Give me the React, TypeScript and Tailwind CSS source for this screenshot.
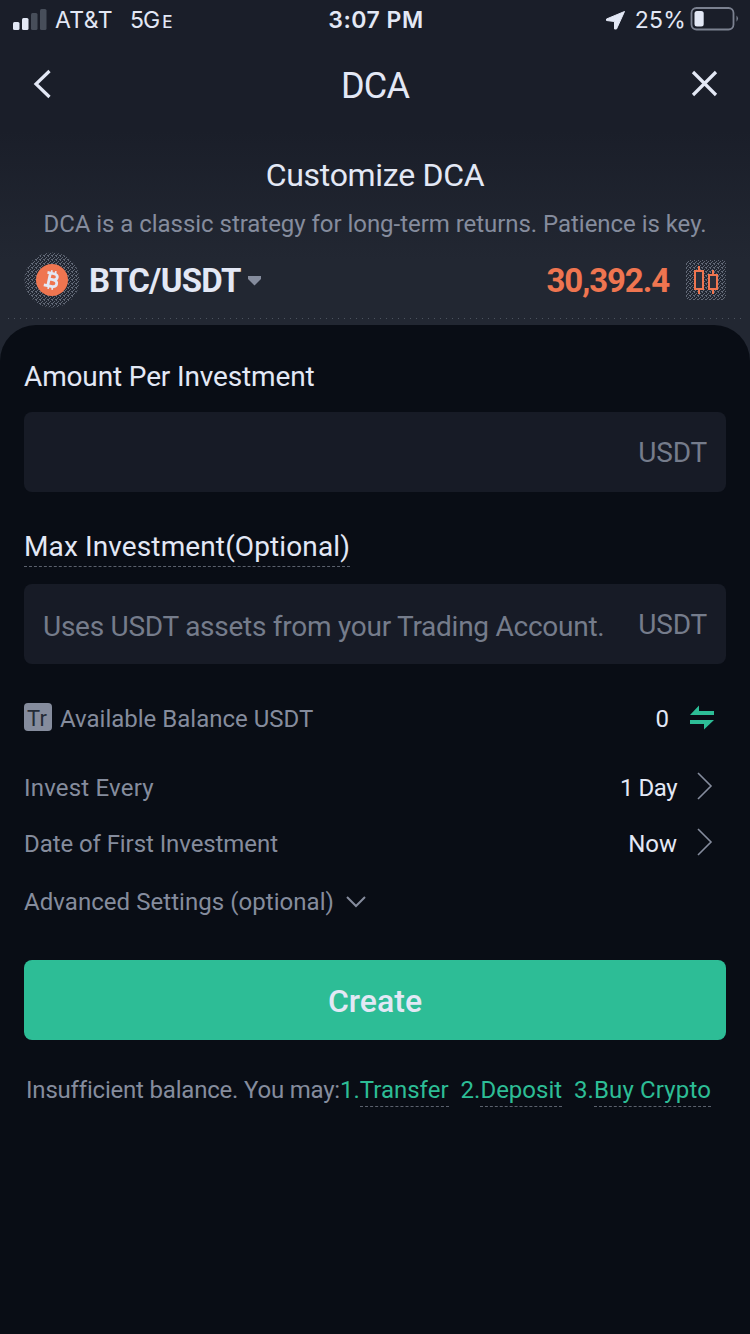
import type { ReactNode } from "react";

function Signal() {
  return (
    <svg width="34" height="22" viewBox="0 0 34 22" className="mt-[2px] shrink-0">
      <rect x="0" y="13" width="6.5" height="8" rx="1.5" fill="#e3e8f5" />
      <rect x="9" y="9" width="6.5" height="12" rx="1.5" fill="#e3e8f5" />
      <rect x="18" y="4" width="6.5" height="17" rx="1.5" fill="#474e5a" />
      <rect x="27" y="0" width="6.5" height="21" rx="1.5" fill="#474e5a" />
    </svg>
  );
}

function StatusBar() {
  return (
    <div className="grid h-10 grid-cols-3 items-center pr-[11px] pb-[2px] pl-[13px] font-['Inter',sans-serif] text-[23px] leading-8">
      <div className="flex items-center">
        <Signal />
        <span className="ml-2 pt-[2px] tracking-[0.4px]">AT&amp;T</span>
        <span className="ml-[17px] pt-[2px] tracking-[-0.9px]">5G</span>
        <span className="ml-[3px] pt-[5px] text-[17px] font-medium">E</span>
      </div>
      <div className="pt-[2px] text-center font-semibold tracking-[0.5px]">3:07 PM</div>
      <div className="flex items-center justify-end">
        <svg width="19" height="19" viewBox="0 0 19 19" className="mt-[2px] mr-[10px]">
          <path d="M18.5 0.500 L0.500 8 L0.500 9.500 L8.500 10.500 L8.500 18 L10.500 18 Z" fill="#e3e8f5" stroke="#e3e8f5" strokeWidth="1" strokeLinejoin="round" />
        </svg>
        <span className="pt-[2px] tracking-[0.2px]">25%</span>
        <svg width="49" height="24" viewBox="0 0 49 24" className="ml-1">
          <rect x="1.5" y="1" width="42" height="21.500" rx="5" fill="none" stroke="#7b8190" strokeWidth="1.8" />
          <rect x="4.500" y="4" width="9.200" height="15.500" rx="2.500" fill="#e3e8f5" />
          <path d="M46.500 8.500 Q49.500 11.500 46.500 14.800 Z" fill="#7b8190" />
        </svg>
      </div>
    </div>
  );
}

function Speckle({ id }: { id: string }) {
  return (
    <pattern id={id} width="4" height="4" patternUnits="userSpaceOnUse">
      <path d="M0 0h1v1h-1z M2 1h1v1h-1z M1 2h1v1h-1z M3 3h1v1h-1z M0 3h1v1h-1z" fill="#626977" />
    </pattern>
  );
}

function BitcoinBadge() {
  return (
    <svg width="56" height="56" viewBox="0 0 56 56" className="shrink-0">
      <defs>
        <Speckle id="coin-speckle" />
      </defs>
      <circle cx="28" cy="28" r="27.500" fill="url(#coin-speckle)" />
      <circle cx="28" cy="28" r="16" fill="#ef7550" />
      <g transform="rotate(12 28 28)" fill="none" stroke="#e3e8f5" strokeWidth="2.800">
        <path d="M22 21.500 H28.500 C34 21.500 34 27.500 28.500 27.500 H25 M28.500 27.500 C35 27.500 35 34.500 28.500 34.500 H21 M25 21.500 V34.500" />
        <path d="M26 18.500 V22 M30 18.500 V22 M26 34 V37.500 M30 34 V37.500" strokeWidth="1.700" />
      </g>
    </svg>
  );
}

function Candles() {
  return (
    <svg width="40" height="40" viewBox="0 0 40 40" className="shrink-0">
      <defs>
        <Speckle id="candle-speckle" />
      </defs>
      <rect width="40" height="40" rx="4" fill="url(#candle-speckle)" />
      <path d="M9 11 H17 V29 H9 Z M13 6 V11 M13 29 V34 M23 15 H31 V29 H23 Z M27 10 V15 M27 29 V34" fill="#292e3a" stroke="#ef7550" strokeWidth="2" />
    </svg>
  );
}

function Chevron() {
  return (
    <svg width="16" height="28" viewBox="0 0 16 28" className="mb-1 ml-5 shrink-0">
      <path d="M1 1 L14 14 L1 27" fill="none" stroke="#858c9d" strokeWidth="1.6" />
    </svg>
  );
}

function Row({ label, children }: { label: ReactNode; children: ReactNode }) {
  return (
    <div className="flex h-14 items-center text-[24px]">
      <span className="mr-auto text-[#858c9d]">{label}</span>
      {children}
      <Chevron />
    </div>
  );
}

function Link({ children }: { children: ReactNode }) {
  return <span className="inline-block h-[33px] border-b border-dashed border-[#5b616d]">{children}</span>;
}

export default function App() {
  return (
    <div className="flex h-[1334px] w-[750px] flex-col overflow-hidden bg-[linear-gradient(#1a1e29_0px,#1a1e29_130px,#222732_260px,#222732_400px)] font-['Roboto','Liberation_Sans',sans-serif] whitespace-nowrap text-[#e3e8f5]">
      <StatusBar />
      <header className="flex h-[90px] items-center justify-between pr-8 pl-[33px]">
        <svg width="26" height="30" viewBox="0 0 26 30" className="mb-[3px]">
          <path d="M16.500 2 L3 15 L16.500 28" fill="none" stroke="#e3e8f5" strokeWidth="3.200" />
        </svg>
        <h1 className="pt-[2px] text-[36px] leading-[88px] tracking-[-0.8px]">DCA</h1>
        <svg width="27" height="27" viewBox="0 0 27 27" className="mb-[3px]">
          <path d="M2 2 L25 25 M25 2 L2 25" fill="none" stroke="#e3e8f5" strokeWidth="3.200" />
        </svg>
      </header>
      <h2 className="mt-[25px] text-center text-[32px] leading-10 tracking-[-0.3px]">Customize DCA</h2>
      <p className="mt-[14px] text-center text-[24px] leading-[30px] tracking-[-0.04px] text-[#858c9d]">
        DCA is a classic strategy for long-term returns. Patience is key.
      </p>
      <div className="mt-[13px] flex h-14 items-center px-6">
        <BitcoinBadge />
        <span className="ml-[9px] pt-[2px] text-[33px] font-bold tracking-[-0.7px]">BTC/USDT</span>
        <svg width="13" height="10" viewBox="0 0 13 10" className="ml-[7px] mt-px">
          <path d="M0 0 H13 V3 L6.500 9.500 L0 3 Z" fill="#858c9d" />
        </svg>
        <span className="ml-auto pt-[2px] text-[33px] font-bold tracking-[-1.1px] text-[#ef7550]">30,392.4</span>
        <span className="ml-[17px]">
          <Candles />
        </span>
      </div>
      <div className="mx-2 mt-[10px] h-px shrink-0 bg-[repeating-linear-gradient(90deg,#4c535f_0px,#4c535f_1px,transparent_1px,transparent_6px)]" />
      <main className="mt-[6px] flex-1 rounded-t-[36px] bg-[#090d15] px-6 pt-8">
        <div className="text-[28px] leading-10 tracking-[-0.14px]">Amount Per Investment</div>
        <div className="mt-[15px] flex h-20 items-center justify-end rounded-lg bg-[#171b26] pr-[19px] text-[28px] text-[#757c8b]">
          <span className="pt-[2px] tracking-[-0.2px]">USDT</span>
        </div>
        <div className="mt-[34px] flex">
          <div className="h-[41px] border-b border-dashed border-[#5b616d] pt-px text-[28px] leading-10 tracking-[0.12px]">Max Investment(Optional)</div>
        </div>
        <div className="mt-[17px] flex h-20 items-center justify-between rounded-lg bg-[#171b26] pr-[19px] pl-[19px] text-[28px] text-[#757c8b]">
          <span className="pt-[6px] tracking-[-0.26px]">Uses USDT assets from your Trading Account.</span>
          <span className="pt-[2px] tracking-[-0.2px]">USDT</span>
        </div>
        <div className="mt-[35px] flex h-10 items-center text-[24px]">
          <span className="mb-1 flex h-7 w-7 items-center justify-center rounded bg-[#858c9d] pt-1 pr-[2px] text-[22px] leading-6 text-[#242b36]">Tr</span>
          <span className="ml-2 text-[#858c9d]">Available Balance USDT</span>
          <span className="ml-auto">0</span>
          <svg width="26" height="26" viewBox="0 0 26 26" className="mr-[11px] mb-[2px] ml-5">
            <path d="M25 6 V10 H1 L10 0.500 V6 Z M1 15 H25 L15 24.500 V19 H1 Z" fill="#2dbd96" />
          </svg>
        </div>
        <div className="mt-[21px] pr-[13px]">
          <Row label={<span className="tracking-[0.2px]">Invest Every</span>}>
            <span className="tracking-[-0.5px]">1 Day</span>
          </Row>
          <Row label={<span className="tracking-[-0.08px]">Date of First Investment</span>}>
            <span>Now</span>
          </Row>
        </div>
        <div className="flex h-[60px] items-center text-[24px] text-[#858c9d]">
          <span className="tracking-[0.05px]">Advanced Settings (optional)</span>
          <svg width="20" height="12" viewBox="0 0 20 12" className="ml-3">
            <path d="M1 1 L10 10 L19 1" fill="none" stroke="#858c9d" strokeWidth="2" />
          </svg>
        </div>
        <button className="mt-7 block h-20 w-full rounded-lg bg-[#2dbd96] pt-[2px] text-[32px] font-medium">Create</button>
        <div className="mt-[34px] flex pl-[2px] text-[24px] leading-8 text-[#2dbd96]">
          <span className="tracking-[-0.2px] text-[#858c9d]">Insufficient balance. You may:</span>
          <span>1.</span>
          <Link>Transfer</Link>
          <span className="ml-3">2.</span>
          <Link>Deposit</Link>
          <span className="ml-3">3.</span>
          <Link>
            <span className="tracking-[0.15px]">Buy Crypto</span>
          </Link>
        </div>
      </main>
    </div>
  );
}
